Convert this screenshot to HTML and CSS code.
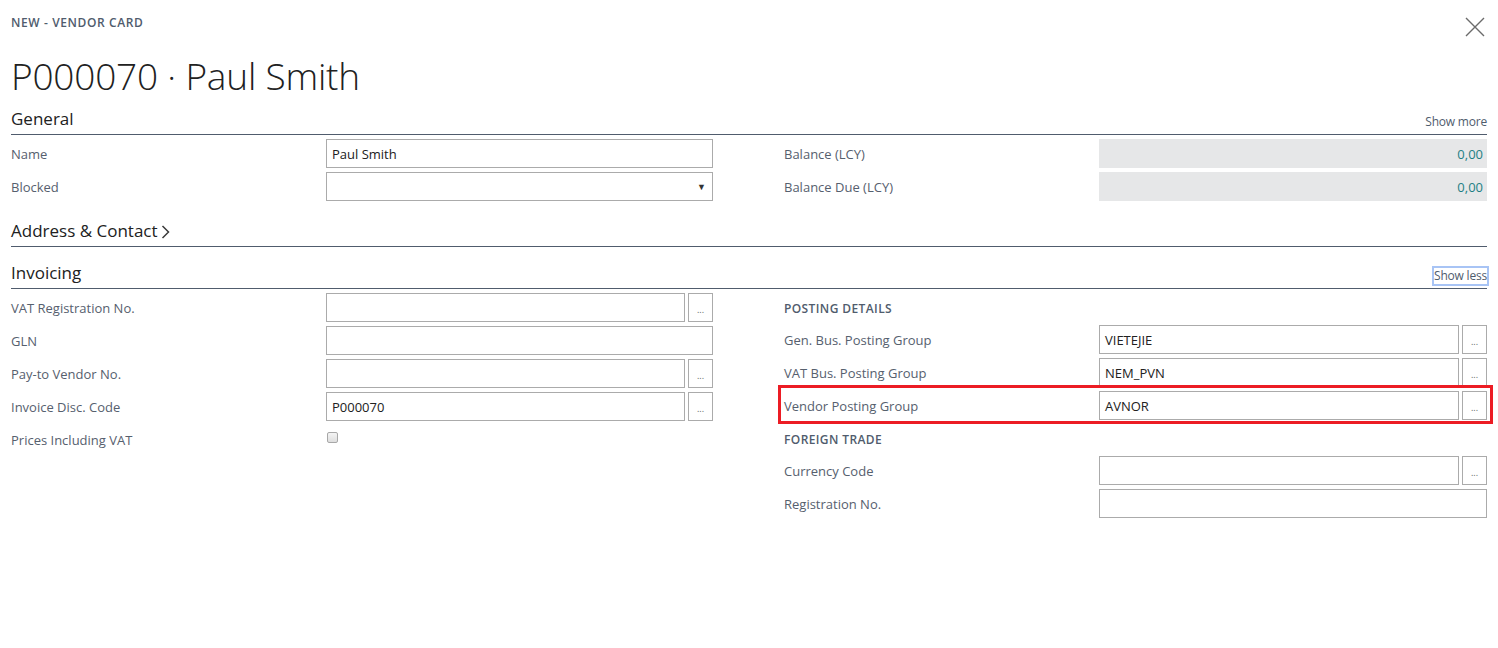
FILE: index.html
```html
<!DOCTYPE html>
<html>
<head>
<meta charset="utf-8">
<link rel="stylesheet" href="styles.css">
</head>
<body>
<div class="page">
  <div class="topbar">
    <div class="caption">NEW - VENDOR CARD</div>
    <button class="close" aria-label="Close">
      <svg width="20" height="20" viewBox="0 0 20 20"><path d="M1 1L19 19M19 1L1 19" stroke="#6b6b6b" stroke-width="1.4" fill="none"/></svg>
    </button>
  </div>
  <h1 class="title">P000070 · Paul Smith</h1>

  <div class="section-head">
    <span class="section-title">General</span>
    <span class="show-link">Show more</span>
  </div>
  <div class="cols">
    <div class="col">
      <div class="row"><span class="label">Name</span><div class="ctrl"><div class="input">Paul Smith</div></div></div>
      <div class="row"><span class="label">Blocked</span><div class="ctrl"><div class="input select"><span class="arrow">▼</span></div></div></div>
    </div>
    <div class="col">
      <div class="row"><span class="label">Balance (LCY)</span><div class="ctrl"><div class="readonly">0,00</div></div></div>
      <div class="row"><span class="label">Balance Due (LCY)</span><div class="ctrl"><div class="readonly">0,00</div></div></div>
    </div>
  </div>

  <div class="section-head collapsed">
    <span class="section-title">Address &amp; Contact<svg class="chev" width="9" height="16" viewBox="0 0 9 16"><path d="M1.5 2L7.5 8L1.5 14" stroke="#3b3b3b" stroke-width="1.5" fill="none"/></svg></span>
  </div>

  <div class="section-head">
    <span class="section-title">Invoicing</span>
    <span class="show-link focused">Show less</span>
  </div>
  <div class="cols">
    <div class="col">
      <div class="row"><span class="label">VAT Registration No.</span><div class="ctrl"><div class="input"></div><div class="dots">...</div></div></div>
      <div class="row"><span class="label">GLN</span><div class="ctrl"><div class="input"></div></div></div>
      <div class="row"><span class="label">Pay-to Vendor No.</span><div class="ctrl"><div class="input"></div><div class="dots">...</div></div></div>
      <div class="row"><span class="label">Invoice Disc. Code</span><div class="ctrl"><div class="input">P000070</div><div class="dots">...</div></div></div>
      <div class="row"><span class="label">Prices Including VAT</span><div class="ctrl"><span class="checkbox"></span></div></div>
    </div>
    <div class="col">
      <div class="group">POSTING DETAILS</div>
      <div class="row"><span class="label">Gen. Bus. Posting Group</span><div class="ctrl"><div class="input">VIETEJIE</div><div class="dots">...</div></div></div>
      <div class="row"><span class="label">VAT Bus. Posting Group</span><div class="ctrl"><div class="input">NEM_PVN</div><div class="dots">...</div></div></div>
      <div class="row highlighted"><span class="label">Vendor Posting Group</span><div class="ctrl"><div class="input">AVNOR</div><div class="dots">...</div></div><span class="redbox"></span></div>
      <div class="group">FOREIGN TRADE</div>
      <div class="row"><span class="label">Currency Code</span><div class="ctrl"><div class="input"></div><div class="dots">...</div></div></div>
      <div class="row"><span class="label">Registration No.</span><div class="ctrl"><div class="input"></div></div></div>
    </div>
  </div>
</div>
</body>
</html>
```

FILE: styles.css
```css
* { box-sizing: border-box; }
html, body { margin: 0; padding: 0; background: #fff; }
body { font-family: "Open Sans", "Noto Sans", sans-serif; color: #505c6d; }
.page { padding: 0 11px; }

.topbar { display: flex; justify-content: space-between; align-items: flex-start; height: 52px; padding-top: 15px; }
.caption { font-size: 12px; font-weight: 600; line-height: 16px; letter-spacing: 0.6px; color: #505c6d; }
.close { background: none; border: 0; padding: 0; margin: 2px 2px 0 0; width: 20px; height: 20px; }

.title { margin: 0; font-size: 37px; font-weight: 300; line-height: 48px; color: #212121; letter-spacing: -0.2px; }

.section-head { display: flex; justify-content: space-between; align-items: flex-end; height: 31px; margin-top: 4px; border-bottom: 1px solid #505c6d; }
.section-head.collapsed { margin-top: 15px; }
.section-head.collapsed + .section-head { margin-top: 11px; }
.section-title { font-size: 17px; line-height: 30px; color: #212121; display: flex; align-items: center; }
.chev { margin-left: 3px; margin-top: 1px; }
.show-link { font-size: 12px; line-height: 16px; margin-bottom: 4px; color: #505c6d; letter-spacing: -0.2px; }
.show-link.focused { outline: 2px solid #a8c4f5; outline-offset: 0px; }

.cols { display: grid; grid-template-columns: 702px 703px; column-gap: 71px; padding-top: 4px; }
.col { display: flex; flex-direction: column; gap: 4px; }
.row { display: grid; grid-template-columns: 315px 1fr; height: 29px; align-items: center; position: relative; }
.label { font-size: 13px; color: #56606e; white-space: nowrap; }
.ctrl { display: flex; gap: 3px; height: 29px; align-items: stretch; }
.input { flex: 1; border: 1px solid #ababab; font-size: 13px; color: #212121; padding: 0 5px; display: flex; align-items: center; position: relative; }
.select .arrow { position: absolute; right: 6px; top: 7px; font-size: 9px; color: #333; }
.dots { width: 25px; flex: 0 0 25px; border: 1px solid #ababab; font-size: 9px; color: #666; text-align: center; line-height: 31px; }
.readonly { flex: 1; background: #e6e7e8; color: #1f7f84; font-size: 13px; text-align: right; padding: 0 4px; display: flex; align-items: center; justify-content: flex-end; }
.checkbox { width: 11px; height: 11px; border: 1px solid #a8a8a8; border-radius: 2px; background: linear-gradient(#f4f4f4, #dedede); align-self: center; margin-left: 1px; margin-top: -4px; }

.group { height: 28px; font-size: 12px; font-weight: 600; line-height: 28px; padding-top: 2px; color: #505c6d; letter-spacing: 0.4px; }
.redbox { position: absolute; left: -6px; right: -6px; top: -6px; bottom: -4px; border: 3px solid #ec1c24; pointer-events: none; }
```
